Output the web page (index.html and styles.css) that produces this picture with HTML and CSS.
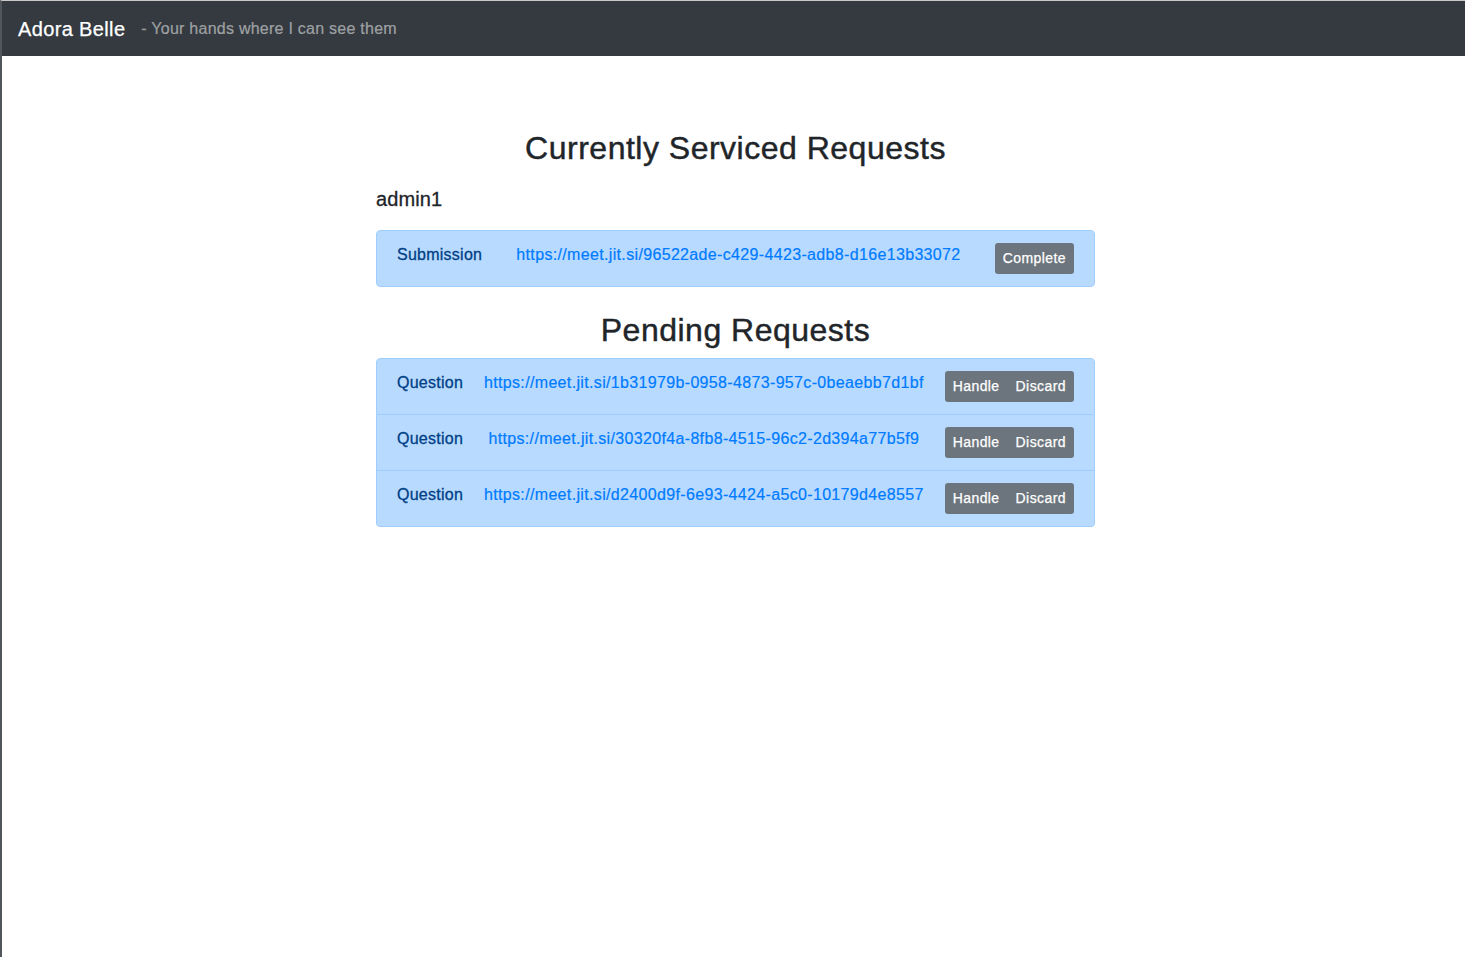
FILE: index.html
```html
<!DOCTYPE html>
<html lang="en">
<head>
<meta charset="utf-8">
<title>Adora Belle</title>
<link rel="stylesheet" href="styles.css">
</head>
<body>
<div class="page">
  <nav class="navbar">
    <span class="brand">Adora Belle</span>
    <span class="tagline">- Your hands where I can see them</span>
  </nav>
  <main class="main">
    <div class="container">
      <h2 class="heading first">Currently Serviced Requests</h2>
      <h5 class="user">admin1</h5>
      <ul class="list">
        <li class="item">
          <span class="label">Submission</span>
          <a class="link" href="#">https://meet.jit.si/96522ade-c429-4423-adb8-d16e13b33072</a>
          <div class="btn-group"><button class="btn">Complete</button></div>
        </li>
      </ul>
      <h2 class="heading">Pending Requests</h2>
      <ul class="list">
        <li class="item">
          <span class="label">Question</span>
          <a class="link" href="#">https://meet.jit.si/1b31979b-0958-4873-957c-0beaebb7d1bf</a>
          <div class="btn-group"><button class="btn">Handle</button><button class="btn">Discard</button></div>
        </li>
        <li class="item">
          <span class="label">Question</span>
          <a class="link" href="#">https://meet.jit.si/30320f4a-8fb8-4515-96c2-2d394a77b5f9</a>
          <div class="btn-group"><button class="btn">Handle</button><button class="btn">Discard</button></div>
        </li>
        <li class="item">
          <span class="label">Question</span>
          <a class="link" href="#">https://meet.jit.si/d2400d9f-6e93-4424-a5c0-10179d4e8557</a>
          <div class="btn-group"><button class="btn">Handle</button><button class="btn">Discard</button></div>
        </li>
      </ul>
    </div>
  </main>
</div>
</body>
</html>
```
FILE: styles.css
```css
* { box-sizing: border-box; }
html, body { margin: 0; padding: 0; }
body {
  font-family: "Liberation Sans", Arial, sans-serif;
  font-size: 16px;
  line-height: 1.5;
  color: #212529;
  background: #fff;
}
.page {
  min-height: 100vh;
  border-top: 1px solid #c9c9c9;
  border-left: 2px solid #50565c;
}
.navbar {
  background: #343a40;
  height: 55px;
  padding: 0 16px;
  display: flex;
  align-items: center;
}
.brand {
  color: #fff;
  font-size: 20px;
  line-height: 30px;
  letter-spacing: 0.36px;
  margin-right: 16px;
  -webkit-text-stroke: 0.25px #fff;
}
.tagline {
  color: rgba(255,255,255,.5);
  font-size: 16px;
  letter-spacing: 0.25px;
  -webkit-text-stroke: 0.15px rgba(255,255,255,.5);
}
.main { padding-left: 4px; }
.container {
  width: 719px;
  margin: 0 auto;
}
.heading {
  font-size: 32px;
  font-weight: 500;
  line-height: 1.2;
  letter-spacing: 0.5px;
  text-align: center;
  margin: 24px 0 8px;
  -webkit-text-stroke: 0.45px #212529;
}
.heading.first { margin-top: 73px; }
.user {
  font-size: 20px;
  font-weight: 500;
  line-height: 1.2;
  letter-spacing: 0.12px;
  margin: 20px 0 19px;
  -webkit-text-stroke: 0.3px #212529;
}
.list {
  list-style: none;
  margin: 0;
  padding: 0;
  border-radius: 4px;
  overflow: hidden;
}
.item {
  display: flex;
  justify-content: space-between;
  align-items: flex-start;
  padding: 12px 20px;
  background: #b8daff;
  color: #004085;
  border: 1px solid #9fcdff;
  border-top-width: 0;
}
.item:first-child { border-top-width: 1px; border-radius: 4px 4px 0 0; }
.item:last-child { border-radius: 0 0 4px 4px; }
.item:only-child { border-radius: 4px; }
.label { line-height: 24px; letter-spacing: 0.25px; -webkit-text-stroke: 0.3px #004085; }
.link {
  color: #007bff;
  text-decoration: none;
  line-height: 24px;
  letter-spacing: 0.34px;
  -webkit-text-stroke: 0.2px #007bff;
}
.btn-group {
  display: flex;
  background: #6c757d;
  border-radius: 3px;
}
.btn {
  font-family: inherit;
  font-size: 14px;
  line-height: 21px;
  letter-spacing: 0.42px;
  padding: 5px 8px;
  color: #fff;
  background: transparent;
  border: 0;
  -webkit-text-stroke: 0.25px #fff;
}
```
